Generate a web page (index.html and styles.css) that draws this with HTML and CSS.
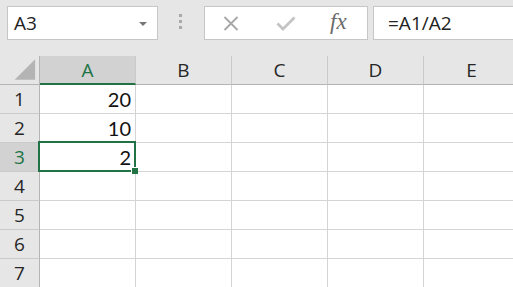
FILE: index.html
```html
<!DOCTYPE html>
<html lang="en">
<head>
    <meta charset="UTF-8">
    <meta name="viewport" content="width=device-width, initial-scale=1.0">
    <title>Book1 - Excel</title>
    <link rel="stylesheet" href="styles.css">
</head>
<body>
    <!-- Formula bar -->
    <div class="toolbar">
        <div class="name-box">
            <span>A3</span>
            <span class="caret"></span>
        </div>
        <div class="grip"><i></i><i></i><i></i></div>
        <div class="actions">
            <svg class="icon-cancel" width="16" height="15" viewBox="0 0 16 15">
                <path d="M1.5 1 L14.5 14 M14.5 1 L1.5 14" stroke="#a6a6a6" stroke-width="1.8" fill="none"/>
            </svg>
            <svg class="icon-enter" width="20" height="15" viewBox="0 0 20 15">
                <path d="M1.5 7.5 L7 13 L18.5 1.5" stroke="#c4c4c4" stroke-width="2.8" fill="none"/>
            </svg>
            <span class="fx">fx</span>
        </div>
        <div class="formula">=A1/A2</div>
    </div>

    <!-- Sheet -->
    <div class="sheet">
        <div class="corner">
            <svg width="40" height="28" viewBox="0 0 40 28"><polygon points="15,24 36,24 36,3" fill="#b4b4b4"/></svg>
        </div>
        <div class="col-head selected">A</div>
        <div class="col-head">B</div>
        <div class="col-head">C</div>
        <div class="col-head">D</div>
        <div class="col-head">E</div>

        <div class="row-head">1</div>
        <div class="cell num">20</div><div class="cell"></div><div class="cell"></div><div class="cell"></div><div class="cell"></div>

        <div class="row-head">2</div>
        <div class="cell num">10</div><div class="cell"></div><div class="cell"></div><div class="cell"></div><div class="cell"></div>

        <div class="row-head selected">3</div>
        <div class="cell num active">2<span class="handle"></span></div><div class="cell"></div><div class="cell"></div><div class="cell"></div><div class="cell"></div>

        <div class="row-head">4</div>
        <div class="cell"></div><div class="cell"></div><div class="cell"></div><div class="cell"></div><div class="cell"></div>

        <div class="row-head">5</div>
        <div class="cell"></div><div class="cell"></div><div class="cell"></div><div class="cell"></div><div class="cell"></div>

        <div class="row-head">6</div>
        <div class="cell"></div><div class="cell"></div><div class="cell"></div><div class="cell"></div><div class="cell"></div>

        <div class="row-head">7</div>
        <div class="cell"></div><div class="cell"></div><div class="cell"></div><div class="cell"></div><div class="cell"></div>
    </div>
</body>
</html>
```

FILE: styles.css
```css
body {
    margin: 0;
    background-color: #e6e6e6;
    font-family: "Open Sans", "Noto Sans", sans-serif;
    color: #222;
    overflow: hidden;
}

/* Formula bar */
.toolbar {
    display: flex;
    align-items: flex-start;
    height: 56px;
    box-sizing: border-box;
    padding: 6px 0 0 7px;
}
.name-box {
    width: 151px;
    height: 34px;
    box-sizing: border-box;
    display: flex;
    align-items: center;
    justify-content: space-between;
    padding: 0 10px 0 6px;
    background: white;
    border: 1px solid #c6c6c6;
    font-size: 19px;
}
.caret {
    width: 0;
    height: 0;
    border-left: 4px solid transparent;
    border-right: 4px solid transparent;
    border-top: 4px solid #767676;
    margin-top: 2px;
}
.grip {
    display: flex;
    flex-direction: column;
    gap: 3px;
    margin: 8px 22px 0 21px;
}
.grip i {
    display: block;
    width: 3px;
    height: 3px;
    background: #a9a9a9;
}
.actions {
    width: 164px;
    height: 34px;
    box-sizing: border-box;
    display: flex;
    align-items: center;
    padding-left: 18px;
    background: white;
    border: 1px solid #c6c6c6;
}
.icon-enter {
    margin-left: 37px;
}
.fx {
    margin-left: 34px;
    font-family: "Liberation Serif", serif;
    font-style: italic;
    font-size: 23px;
    color: #6a6a6a;
    margin-top: -3px;
}
.formula {
    flex: 1 0 auto;
    height: 34px;
    box-sizing: border-box;
    margin: 0 -10px 0 5px;
    padding-left: 14px;
    display: flex;
    align-items: center;
    background: white;
    border: 1px solid #c6c6c6;
    font-size: 19px;
}

/* Sheet grid */
.sheet {
    display: grid;
    grid-template-columns: 40px repeat(5, 96px);
    grid-auto-rows: 29px;
    background: white;
}
.corner, .col-head, .row-head {
    background: #e6e6e6;
    box-sizing: border-box;
    display: flex;
    align-items: center;
    justify-content: center;
    font-size: 19px;
    color: #262626;
}
.corner {
    border-right: 1px solid #b4b4b4;
    border-bottom: 1px solid #b4b4b4;
}
.col-head {
    border-right: 1px solid #cacaca;
    border-bottom: 1px solid #b4b4b4;
}
.row-head {
    border-right: 1px solid #b4b4b4;
    border-bottom: 1px solid #cacaca;
}
.col-head.selected {
    background: #d2d2d2;
    color: #217346;
    border-bottom: 2px solid #217346;
}
.row-head.selected {
    background: #d2d2d2;
    color: #217346;
}
.cell {
    box-sizing: border-box;
    border-right: 1px solid #d4d4d4;
    border-bottom: 1px solid #d4d4d4;
    font-family: "Lato", "Liberation Sans", sans-serif;
    font-size: 20px;
    color: #111;
}
.cell.num {
    display: flex;
    align-items: flex-end;
    justify-content: flex-end;
    padding: 0 4px 2px 0;
}
.cell.active {
    position: relative;
}
.cell.active::before {
    content: "";
    position: absolute;
    top: -2px;
    left: -2px;
    right: -1px;
    bottom: -1px;
    border: 2px solid #217346;
}
.handle {
    position: absolute;
    right: -3px;
    bottom: -3px;
    width: 6px;
    height: 6px;
    background: #217346;
    border: 1px solid white;
    border-width: 1px 0 0 1px;
}
```
